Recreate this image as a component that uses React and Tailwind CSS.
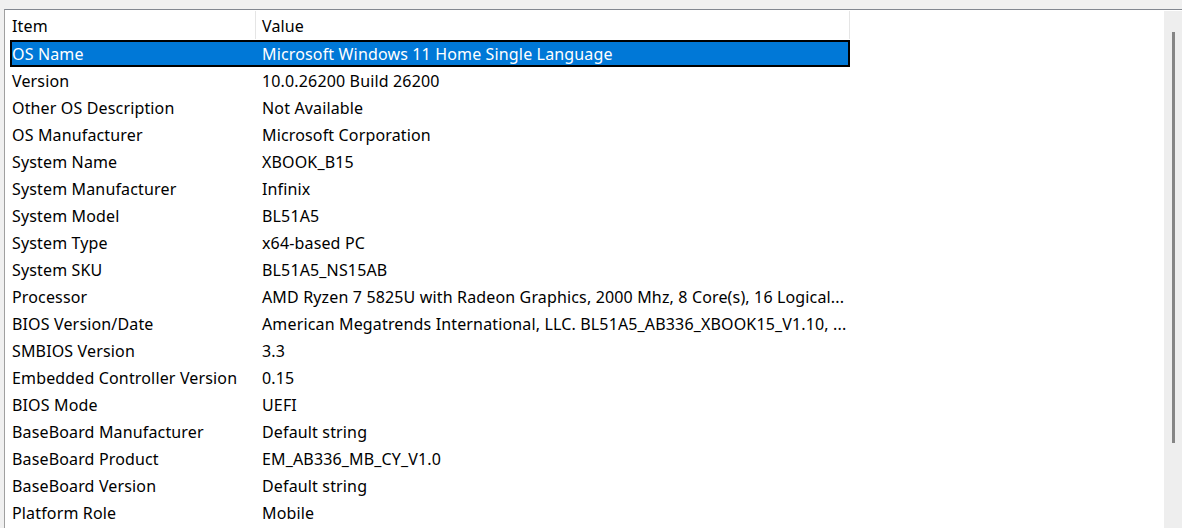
import React from 'react';

const rows = [
  ['OS Name', 'Microsoft Windows 11 Home Single Language'],
  ['Version', '10.0.26200 Build 26200'],
  ['Other OS Description', 'Not Available'],
  ['OS Manufacturer', 'Microsoft Corporation'],
  ['System Name', 'XBOOK_B15'],
  ['System Manufacturer', 'Infinix'],
  ['System Model', 'BL51A5'],
  ['System Type', 'x64-based PC'],
  ['System SKU', 'BL51A5_NS15AB'],
  ['Processor', 'AMD Ryzen 7 5825U with Radeon Graphics, 2000 Mhz, 8 Core(s), 16 Logical...'],
  ['BIOS Version/Date', 'American Megatrends International, LLC. BL51A5_AB336_XBOOK15_V1.10, ...'],
  ['SMBIOS Version', '3.3'],
  ['Embedded Controller Version', '0.15'],
  ['BIOS Mode', 'UEFI'],
  ['BaseBoard Manufacturer', 'Default string'],
  ['BaseBoard Product', 'EM_AB336_MB_CY_V1.0'],
  ['BaseBoard Version', 'Default string'],
  ['Platform Role', 'Mobile'],
];

const App = () => {
  const selected = 0;

  return (
    <div className="w-[1182px] h-[528px] overflow-hidden bg-[#f0f0f0] pt-[9px] pl-[4px] text-[16px] tracking-[0.15px] text-black font-['Segoe_UI','Noto_Sans',sans-serif]">
      <div className="flex h-[600px] bg-white border-t border-l border-t-[#828790] border-l-[#a0a0a0]">
        <div className="flex-1 pl-[5px]">
          {/* column headers */}
          <div className="flex h-[30px] w-[840px]">
            <div className="w-[246px] flex items-center pl-[2px] pt-[2px] border-r border-[#e5e5e5] my-[1px]">Item</div>
            <div className="flex-1 flex items-center pl-[6px] pt-[2px] border-r border-[#e5e5e5] my-[1px]">Value</div>
          </div>
          {rows.map(([item, value], idx) => (
            <div
              key={idx}
              className={
                idx === selected
                  ? 'flex h-[27px] w-[840px] items-center bg-[#0078d7] text-white outline-2 -outline-offset-2 outline-black'
                  : 'flex h-[27px] w-[840px] items-center'
              }
            >
              <div className="w-[250px] pl-[2px] whitespace-nowrap">{item}</div>
              <div className="flex-1 pl-[2px] whitespace-nowrap overflow-hidden">{value}</div>
            </div>
          ))}
        </div>
        {/* vertical scrollbar */}
        <div className="w-[18px] mt-[1px] bg-[#eeeeee] pl-[8px] pt-[21px]">
          <div className="w-[3px] h-[411px] bg-[#858585]" />
        </div>
      </div>
    </div>
  );
};

export default App;
